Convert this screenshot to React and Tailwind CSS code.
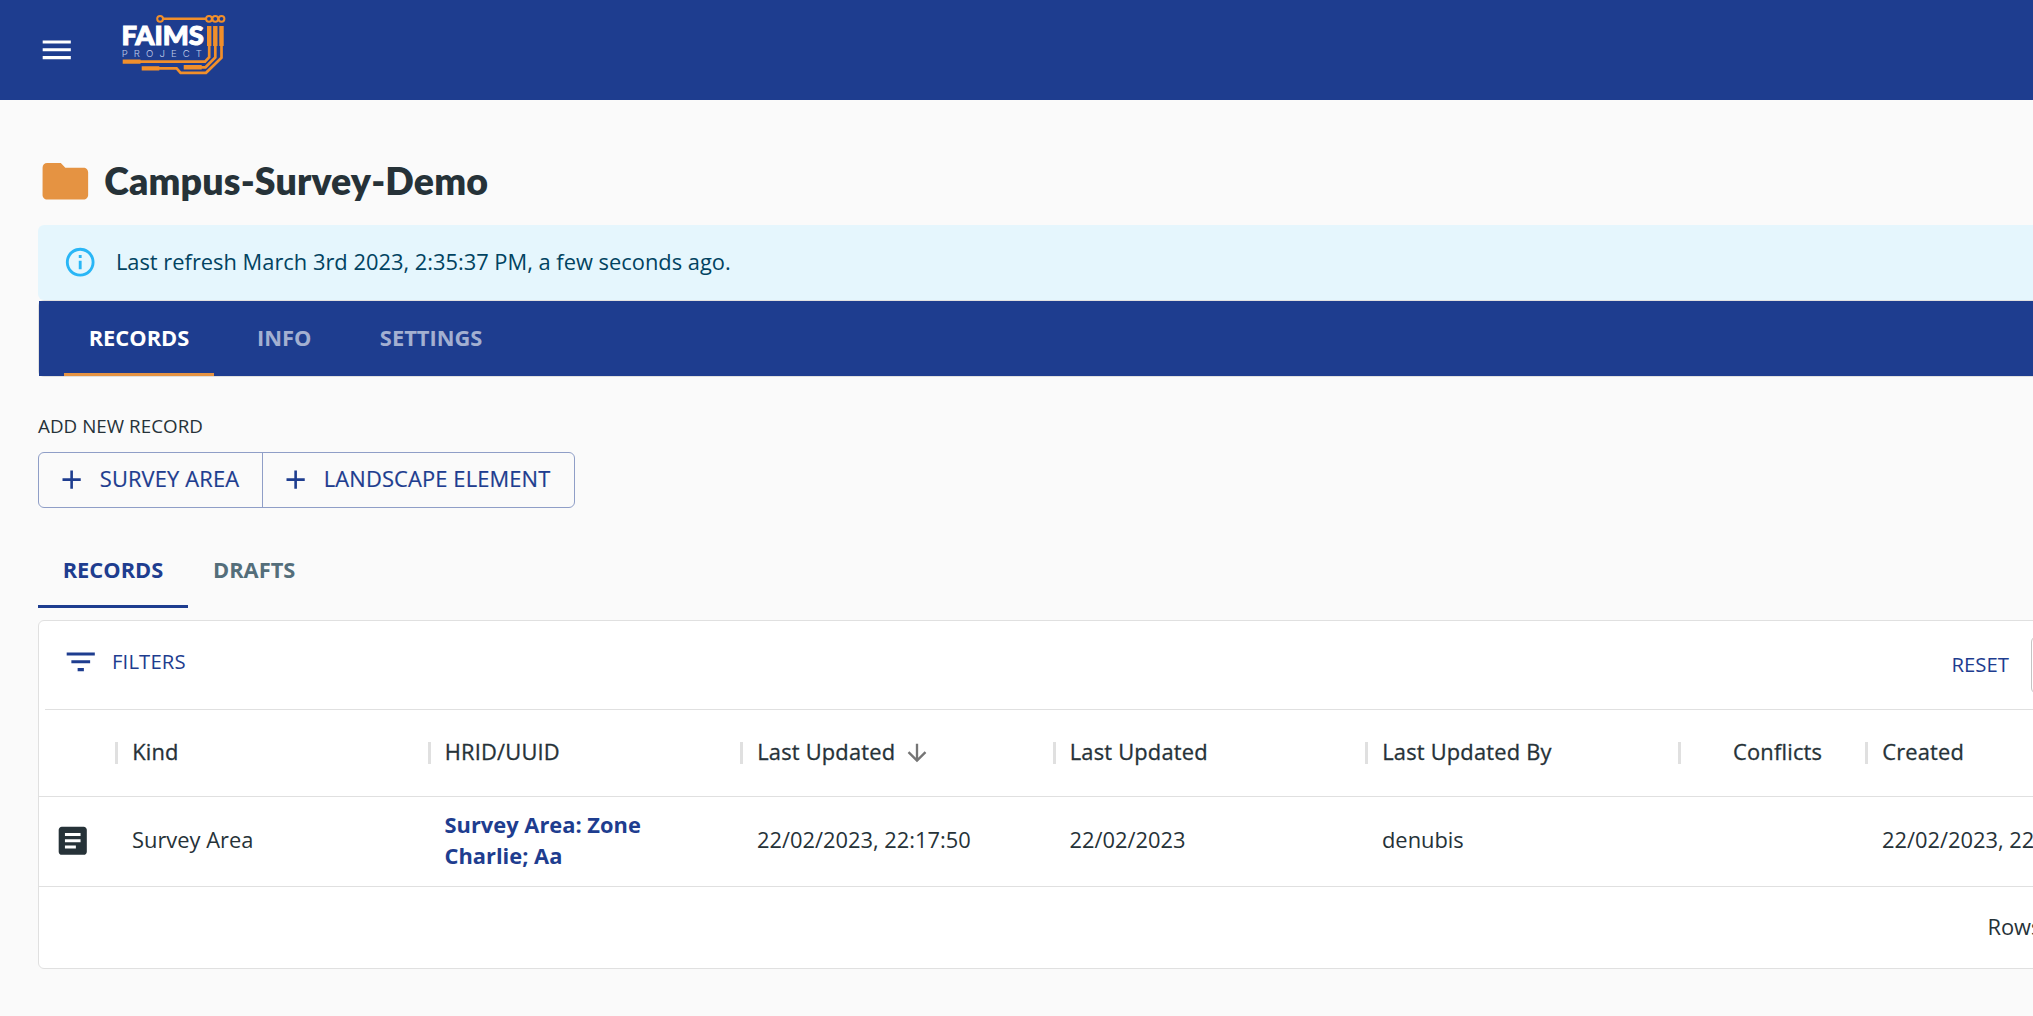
const columns = [
  { label: "Kind", width: "w-[312.5px]" },
  { label: "HRID/UUID", width: "w-[312.5px]" },
  { label: "Last Updated", width: "w-[312.5px]", sorted: true },
  { label: "Last Updated", width: "w-[312.5px]" },
  { label: "Last Updated By", width: "w-[312.5px]" },
  { label: "Conflicts", width: "w-[187.5px]", inset: "pl-[52.5px]" },
  { label: "Created", width: "w-[312.5px]" },
];

const cells = [
  { text: "Survey Area", width: "w-[312.5px]" },
  { text: "Survey Area: Zone Charlie; Aa", width: "w-[312.5px]", link: true },
  { text: "22/02/2023, 22:17:50", width: "w-[312.5px]" },
  { text: "22/02/2023", width: "w-[312.5px]" },
  { text: "denubis", width: "w-[312.5px]" },
  { text: "", width: "w-[187.5px]" },
  { text: "22/02/2023, 22:17:50", width: "w-[312.5px]" },
];

function Icon({ d, className }) {
  return (
    <svg viewBox="0 0 24 24" fill="currentColor" className={`shrink-0 ${className}`}>
      <path d={d} />
    </svg>
  );
}

const MENU = "M3 18h18v-2H3v2zm0-5h18v-2H3v2zm0-7v2h18V6H3z";
const FOLDER = "M10 4H4c-1.1 0-1.99.9-1.99 2L2 18c0 1.1.9 2 2 2h16c1.1 0 2-.9 2-2V8c0-1.1-.9-2-2-2h-8l-2-2z";
const INFO =
  "M11 7h2v2h-2zm0 4h2v6h-2zm1-9C6.48 2 2 6.48 2 12s4.48 10 10 10 10-4.48 10-10S17.52 2 12 2zm0 18c-4.41 0-8-3.59-8-8s3.59-8 8-8 8 3.59 8 8-3.59 8-8 8z";
const ADD = "M19 13h-6v6h-2v-6H5v-2h6V5h2v6h6v2z";
const FILTER = "M10 18h4v-2h-4v2zM3 6v2h18V6H3zm3 7h12v-2H6v2z";
const ARROW_DOWN = "M20 12l-1.41-1.41L13 16.17V4h-2v12.17l-5.58-5.59L4 12l8 8 8-8z";
const ARTICLE =
  "M19 3H5c-1.1 0-2 .9-2 2v14c0 1.1.9 2 2 2h14c1.1 0 2-.9 2-2V5c0-1.1-.9-2-2-2zm-5 14H7v-2h7v2zm3-4H7v-2h10v2zm0-4H7V7h10v2z";

function Logo() {
  return (
    <svg viewBox="120 10 108 68" className="h-[68px] w-[108px] shrink-0">
      <g fill="none" stroke="#f18f2b">
        <g strokeWidth="2">
          <circle cx="160.1" cy="18.8" r="2.9" />
          <circle cx="209" cy="18.8" r="2.9" />
          <circle cx="215.3" cy="18.8" r="2.9" />
          <circle cx="221.5" cy="18.8" r="2.9" />
        </g>
        <path strokeWidth="2.4" d="M163 18.8H206" />
        <path strokeWidth="4.4" d="M209.2 26V46M215.3 26V46M221.5 26V46M122.7 61.6H140.5M141.7 68.4H159.3M183.7 67.3H201.7" />
        <path
          strokeWidth="2.7"
          d="M209.2 45V57.3L205 61.6H139M215.3 45V57.5L205.5 67.3H201M221.5 45V57.6L206 72.8H180.6L176.6 68.4H158"
        />
      </g>
      <text x="121.4" y="45.3" fill="#fff" stroke="#fff" strokeWidth="1" fontSize="26" fontWeight="900" fontFamily="Lato, sans-serif" textLength="82.5" lengthAdjust="spacingAndGlyphs">
        FAIMS
      </text>
      <text x="121.7" y="57" fill="#c3cdea" fontSize="9.6" fontWeight="300" fontFamily="Inter, sans-serif" letterSpacing="6.1">
        PROJECT
      </text>
    </svg>
  );
}

export default function App() {
  return (
    <div className="h-[1016px] w-full overflow-hidden bg-[#fafafa] font-['Open_Sans',sans-serif] text-[21.875px] leading-[31.25px] text-[#263238]">
      <header className="flex h-[100px] bg-[#1e3d8f] pl-[37.5px] text-white">
        <Icon d={MENU} className="mt-[31.25px] size-[37.5px]" />
        <div className="ml-[45px] mt-[10px]">
          <Logo />
        </div>
      </header>

      <main className="ml-[38px] flex w-[2400px] flex-col">
        <div className="mt-[54px] flex h-[55px] items-center">
          <Icon d={FOLDER} className="-ml-[0.5px] size-[54.7px] text-[#e59342]" />
          <h1 className="ml-[12px] pb-0.5 font-['Lato',sans-serif] text-[37.5px] font-extrabold leading-[50px] tracking-[0.15px]">Campus-Survey-Demo</h1>
        </div>

        <div className="mt-4 flex h-[75px] items-center rounded-[6px] bg-[#e5f6fd] pl-[25px] text-[#014361]">
          <Icon d={INFO} className="size-[34.4px] text-[#29b6f6]" />
          <p className="ml-[18.5px] pb-0.5">Last refresh March 3rd 2023, 2:35:37 PM, a few seconds ago.</p>
        </div>

        <section className="rounded-[6px] border border-[#e0e0e0]">
          <nav className="flex h-[75px] bg-[#1e3d8f] pl-[25px] font-bold text-white">
            <div className="flex w-[150px] items-center justify-center border-b-[3px] border-[#e59342] pt-px">RECORDS</div>
            <div className="flex w-[140.6px] items-center justify-center pb-0.5 text-white/60">INFO</div>
            <div className="flex w-[153px] items-center justify-center pb-0.5 text-white/60">SETTINGS</div>
          </nav>
        </section>

        <p className="mt-[33px] text-[18.75px] tracking-[0.05px]">ADD NEW RECORD</p>

        <div className="mt-[11px] flex h-[56px] w-[537px] rounded-[6px] border border-[#8f9ec7] tracking-[0.15px] text-[#1e3d8f] [-webkit-text-stroke:0.2px]">
          <button className="flex w-[224px] items-center border-r border-[#8f9ec7] pl-[17px]">
            <Icon d={ADD} className="mb-px size-[31.25px]" />
            <span className="ml-[12.5px] whitespace-nowrap pb-[3px]">SURVEY AREA</span>
          </button>
          <button className="flex items-center pl-[17px]">
            <Icon d={ADD} className="mb-px size-[31.25px]" />
            <span className="ml-[12.5px] whitespace-nowrap pb-[3px]">LANDSCAPE ELEMENT</span>
          </button>
        </div>

        <nav className="mt-[25px] flex h-[75px] font-bold">
          <div className="flex w-[150px] items-center justify-center border-b-[3px] border-[#1e3d8f] pt-px text-[#1e3d8f]">RECORDS</div>
          <div className="flex w-[132.4px] items-center justify-center pb-0.5 text-[#546e7a]">DRAFTS</div>
        </nav>

        <section className="mt-3 h-[349px] rounded-[6px] border border-[#e0e0e0] bg-white">
          <div className="ml-1.5 flex h-[89px] border-b border-[#e0e0e0] text-[20.3125px] text-[#1e3d8f]">
            <div className="flex h-[80px] w-[1906.5px] items-center pl-[17px]">
              <Icon d={FILTER} className="size-[37.5px]" />
              <span className="ml-[12.5px] tracking-[0.12px]">FILTERS</span>
            </div>
            <div className="mt-7 w-[79.5px]">RESET</div>
            <div className="mt-[15px] h-[58px] w-[300px] rounded-[6px] border border-[#c4c4c4]" />
          </div>

          <div className="flex h-[87px] items-center border-b border-[#e0e0e0] tracking-[0.2px] [-webkit-text-stroke:0.3px]">
            <div className="w-[76px] shrink-0" />
            {columns.map((c, i) => (
              <div key={i} className={`flex shrink-0 items-center ${c.width}`}>
                <span className="h-[22px] w-[3px] bg-[#e0e0e0]" />
                <span className={`pb-[3px] ${c.inset ?? "pl-[14.2px]"}`}>{c.label}</span>
                {c.sorted && <Icon d={ARROW_DOWN} className="ml-[7.5px] size-[28px] text-[#757575]" />}
              </div>
            ))}
          </div>

          <div className="flex h-[90px] items-center border-b border-[#e0e0e0] pb-[3px]">
            <div className="w-[76px] shrink-0 pl-[15px]">
              <Icon d={ARTICLE} className="size-[37.5px]" />
            </div>
            {cells.map((c, i) => (
              <div key={i} className={`shrink-0 pl-[17px] ${c.width}`}>
                {c.link ? <div className="w-[210px] font-bold text-[#1e3d8f]">{c.text}</div> : <div className="pb-px">{c.text}</div>}
              </div>
            ))}
          </div>

          <div className="flex h-[79px] items-center pl-[1948.4px]">Rows per page:</div>
        </section>
      </main>
    </div>
  );
}
